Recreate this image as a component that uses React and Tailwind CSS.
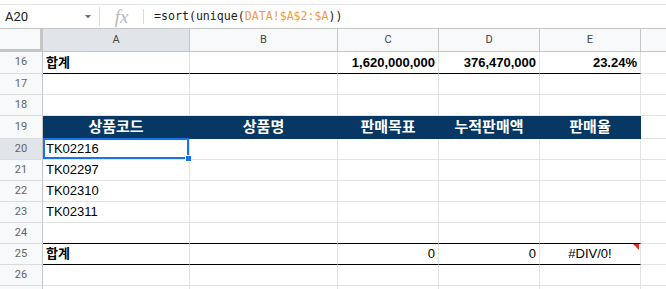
import React from "react";

const font = { fontFamily: '"Liberation Sans", "Noto Sans CJK KR", sans-serif' };

const WIDTHS = ["w-[147px]", "w-[148px]", "w-[101px]", "w-[101px]", "w-[101px]"];
const LETTERS = ["A", "B", "C", "D", "E"];

function RowHead({ n, active }) {
  return (
    <div
      className={`w-[43px] shrink-0 border-r border-b border-r-[#c4c7c5] border-b-[#dadce0] flex items-center justify-center text-[11px] text-[#5f6368] ${
        active ? "bg-[#e1e5ea]" : "bg-[#f8f9fa]"
      }`}
      style={{ fontFamily: "Roboto, sans-serif" }}
    >
      {n}
    </div>
  );
}

function Cell({ i, children, align = "left", bold, black, navy, extra }) {
  const just = align === "right" ? "justify-end" : align === "center" ? "justify-center" : "justify-start";
  return (
    <div
      className={`${WIDTHS[i]} shrink-0 relative flex items-center px-[3px] border-r border-b whitespace-nowrap ${just} ${
        bold ? "font-bold" : ""
      } ${navy ? "bg-[#073763] border-[#073763] text-white text-[15px]" : "text-[13px] text-black border-r-[#e2e3e3]"} ${
        navy ? "" : black ? "border-b-black" : "border-b-[#e2e3e3]"
      }`}
    >
      {children}
      {extra}
    </div>
  );
}

function Row({ n, h, cells = [], black, navy, active }) {
  return (
    <div className={`flex ${h}`}>
      <RowHead n={n} active={active} />
      {LETTERS.map((_, i) => {
        const c = cells[i] || {};
        return (
          <Cell key={i} i={i} align={c.align} bold={c.bold} black={black} navy={navy} extra={c.extra}>
            {c.text}
          </Cell>
        );
      })}
      <div className="flex-1 border-b border-[#e2e3e3]" />
    </div>
  );
}

export default function App() {
  return (
    <div className="w-[666px] h-[289px] overflow-hidden bg-white" style={font}>
      {/* formula bar */}
      <div className="h-[4px]" />
      <div className="h-[25px] flex items-center border-t border-b border-t-[#e3e3e3] border-b-[#c4c7c5]">
        <div className="w-[99px] shrink-0 flex items-center justify-between pl-[5px] pr-[8px] text-[13px] text-[#202124]" style={{ fontFamily: "Roboto, sans-serif" }}>
          <span>A20</span>
          <svg width="6" height="4" viewBox="0 0 6 4" className="mt-px">
            <path d="M0 0h6L3 3.5z" fill="#6b6e72" />
          </svg>
        </div>
        <div className="w-px h-[19px] bg-[#dadce0]" />
        <div className="w-[43px] flex items-center justify-center">
          <span className="text-[19px] italic text-[#b8b9ba] leading-none" style={{ fontFamily: '"Liberation Serif", serif' }}>
            fx
          </span>
        </div>
        <div className="w-px h-[15px] bg-[#dadce0]" />
        <div className="pl-[10px] text-[11.6px] text-[#202124]" style={{ fontFamily: '"DejaVu Sans Mono", monospace' }}>
          =sort(unique(<span className="text-[#f29a45]">DATA!$A$2:$A</span>))
        </div>
      </div>

      {/* column header */}
      <div className="flex h-[23px] bg-[#f8f9fa] text-[11px] text-[#444746]" style={{ fontFamily: "Roboto, sans-serif" }}>
        <div className="w-[43px] shrink-0 border-r-[3px] border-b-[3px] border-[#c4c7c5] bg-[#f8f9fa]" />
        {LETTERS.map((l, i) => (
          <div
            key={l}
            className={`${WIDTHS[i]} shrink-0 flex items-center justify-center border-r border-b border-[#c4c7c5] ${
              i === 0 ? "bg-[#e1e5ea]" : ""
            }`}
          >
            {l}
          </div>
        ))}
        <div className="flex-1 border-b border-[#c4c7c5]" />
      </div>

      <Row
        n="16"
        h="h-[22px]"
        black
        cells={[
          { text: "합계", bold: true },
          {},
          { text: "1,620,000,000", bold: true, align: "right" },
          { text: "376,470,000", bold: true, align: "right" },
          { text: "23.24%", bold: true, align: "right" },
        ]}
      />
      <Row n="17" h="h-[21px]" />
      <Row n="18" h="h-[21px]" />
      <Row
        n="19"
        h="h-[23px]"
        navy
        cells={[
          { text: "상품코드", bold: true, align: "center" },
          { text: "상품명", bold: true, align: "center" },
          { text: "판매목표", bold: true, align: "center" },
          { text: "누적판매액", bold: true, align: "center" },
          { text: "판매율", bold: true, align: "center" },
        ]}
      />
      <Row
        n="20"
        h="h-[21px]"
        active
        cells={[
          {
            text: "TK02216",
            extra: (
              <>
                <div className="absolute -top-px left-0 right-0 bottom-0 border-2 border-[#1a73e8] pointer-events-none z-10" />
                <div className="absolute left-[142px] top-[16px] w-[7px] h-[7px] bg-[#1a73e8] border border-white z-20" />
              </>
            ),
          },
        ]}
      />
      <Row n="21" h="h-[21px]" cells={[{ text: "TK02297" }]} />
      <Row n="22" h="h-[21px]" cells={[{ text: "TK02310" }]} />
      <Row n="23" h="h-[21px]" cells={[{ text: "TK02311" }]} />
      <Row n="24" h="h-[21px]" black />
      <Row
        n="25"
        h="h-[21px]"
        black
        cells={[
          { text: "합계", bold: true },
          {},
          { text: "0", align: "right" },
          { text: "0", align: "right" },
          {
            text: "#DIV/0!",
            align: "center",
            extra: (
              <svg width="6" height="6" viewBox="0 0 6 6" className="absolute top-0 right-px">
                <path d="M0 0h6v6z" fill="#d93025" />
              </svg>
            ),
          },
        ]}
      />
      <Row n="26" h="h-[21px]" />
      <Row n="" h="h-[21px]" />
    </div>
  );
}
